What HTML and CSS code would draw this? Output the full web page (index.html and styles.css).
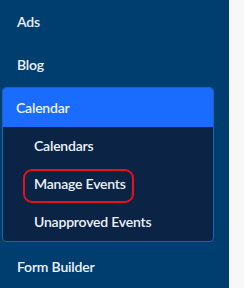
FILE: index.html
```html
<!DOCTYPE html>
<html lang="en">
<head>
  <meta charset="UTF-8">
  <meta name="viewport" content="width=device-width, initial-scale=1.0">
  <title>Menu</title>
  <link rel="stylesheet" href="styles.css">
</head>
<body>
<nav class="sidebar">
  <ul class="menu">
    <li class="menu-item"><a href="#">Ads</a></li>
    <li class="menu-item"><a href="#">Blog</a></li>
    <li class="menu-group open">
      <a href="#" class="group-title">Calendar</a>
      <ul class="submenu">
        <li><a href="#">Calendars</a></li>
        <li><a href="#"><span class="marked">Manage Events</span></a></li>
        <li><a href="#">Unapproved Events</a></li>
      </ul>
    </li>
    <li class="menu-item"><a href="#">Form Builder</a></li>
  </ul>
</nav>
</body>
</html>
```

FILE: styles.css
```css
html, body { margin: 0; height: 100%; }
body {
  background: #f7f7f7;
  font-family: "Lato", "Liberation Sans", sans-serif;
  font-size: 14px;
  font-weight: 600;
}
.sidebar {
  width: 229px;
  height: 100%;
  background: #003e70;
}
.menu, .submenu {
  list-style: none;
  margin: 0;
  padding: 0;
}
.menu a {
  display: block;
  color: #eef4ff;
  text-decoration: none;
  letter-spacing: -0.2px;
}
.menu-item a {
  height: 43px;
  line-height: 43px;
  padding-left: 17px;
}
.menu-group {
  margin: 1px 15px 3px 2px;
  border: 1px solid #1d63b0;
  border-radius: 4px;
  background: #0b2344;
  overflow: hidden;
}
.group-title {
  height: 39px;
  line-height: 39px;
  padding-left: 14px;
  background: #1a6bff;
  margin: -1px -1px 0 -1px;
  padding-top: 1px;
  border-radius: 4px 4px 0 0;
}
.submenu a {
  height: 38px;
  line-height: 38px;
  padding-left: 31px;
}
.marked { position: relative; }
.marked::after {
  content: "";
  position: absolute;
  left: -11px;
  right: -8px;
  top: -6px;
  bottom: -11px;
  border: 2px solid #e8101a;
  border-radius: 9px;
}
```
